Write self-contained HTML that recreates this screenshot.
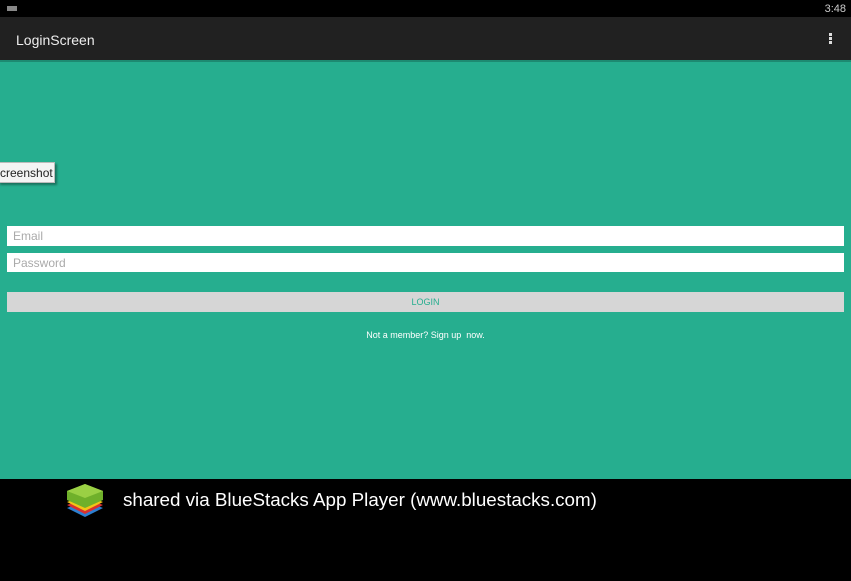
<!DOCTYPE html>
<html><head><style>
*{margin:0;padding:0;box-sizing:border-box}
body{width:851px;height:581px;background:#000;position:relative;overflow:hidden;font-family:"Liberation Sans",sans-serif}
.abs{position:absolute}
</style></head><body>
<div class="abs" style="left:0;top:0;width:851px;height:17px;background:#000"></div>
<div class="abs" style="left:7px;top:6px;width:10px;height:5px;background:#888"></div>
<div class="abs" style="right:5px;top:3px;color:#ccc;font-size:11px">3:48</div>
<div class="abs" style="left:0;top:17px;width:851px;height:43px;background:#212121"></div>
<div class="abs" style="left:16px;top:32px;color:#eee;font-size:14px">LoginScreen</div>
<div class="abs" style="left:829px;top:33px;width:3px;height:3px;background:#ddd;box-shadow:0 4px 0 #ddd,0 8px 0 #ddd"></div>
<div class="abs" style="left:0;top:60px;width:851px;height:419px;background:#26ae8f"></div>
<div class="abs" style="left:0;top:60px;width:851px;height:2px;background:#1d8a71"></div>
<div class="abs" style="left:-2px;top:162px;width:57px;height:21px;background:#f4f4f4;border:1px solid #bbb;box-shadow:2px 2px 2px rgba(0,0,0,.35);font-size:12px;color:#222;padding:3px 0 0 1px">creenshot</div>
<div class="abs" style="left:7px;top:226px;width:837px;height:20px;background:#fff;color:#aaa;font-size:12px;padding:3px 6px">Email</div>
<div class="abs" style="left:7px;top:253px;width:837px;height:19px;background:#fff;color:#aaa;font-size:12px;padding:3px 6px">Password</div>
<div class="abs" style="left:7px;top:292px;width:837px;height:20px;background:#d6d6d6;color:#26ae8f;font-size:9px;text-align:center;padding-top:5px">LOGIN</div>
<div class="abs" style="left:0;top:330px;width:851px;text-align:center;color:#fff;font-size:9px">Not a member? Sign up &nbsp;now.</div>
<svg class="abs" style="left:64px;top:482px" width="42" height="38" viewBox="0 0 42 38">
<path d="M3 26 L21 19 L39 26 L21 35 Z" fill="#2c7fd0"/>
<path d="M3 23 L21 16 L39 23 L21 32 Z" fill="#d83030"/>
<path d="M3 20 L21 13 L39 20 L21 29 Z" fill="#f2c417"/>
<path d="M3 9 L21 2 L39 9 L39 18 L21 26 L3 18 Z" fill="#6fb02a"/>
<path d="M3 9 L21 2 L39 9 L21 16 Z" fill="#9ad044"/>
</svg>
<div class="abs" style="left:123px;top:489px;color:#fff;font-size:18.8px">shared via BlueStacks App Player (www.bluestacks.com)</div>
</body></html>
